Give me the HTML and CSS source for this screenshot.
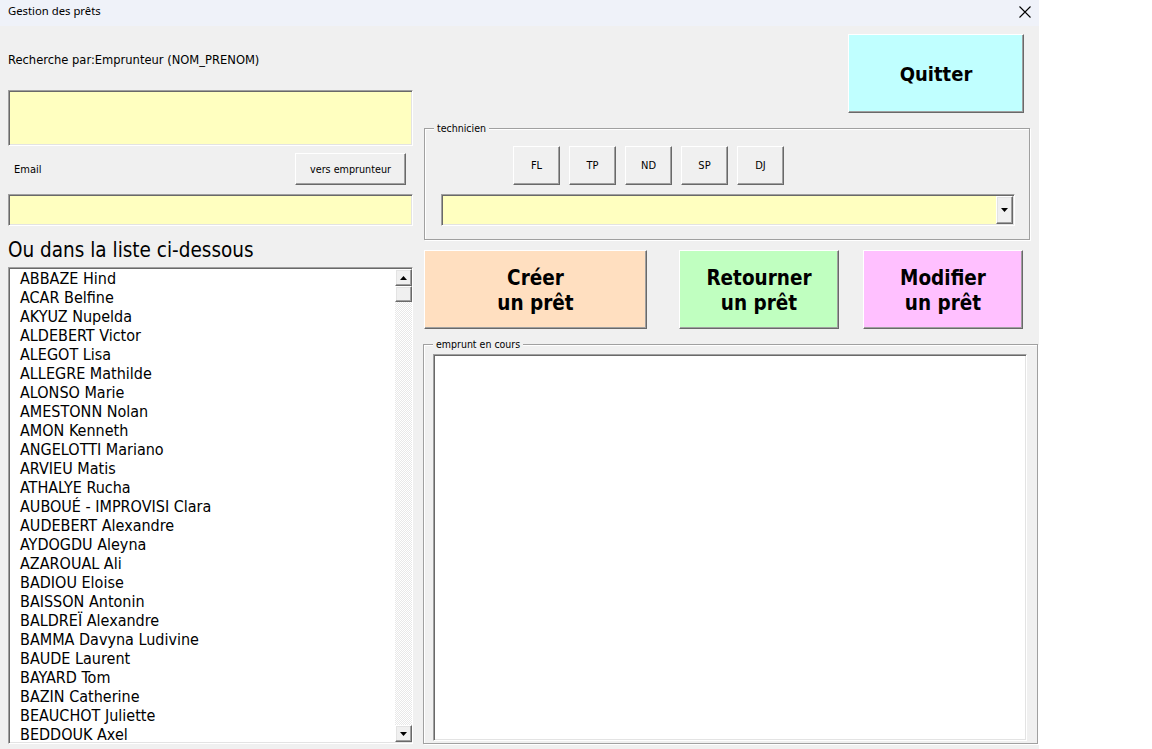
FILE: index.html
```html
<!DOCTYPE html>
<html lang="fr">
<head>
<meta charset="utf-8">
<title>Gestion des prêts</title>
<link rel="stylesheet" href="styles.css">
</head>
<body>
<div class="screen">
  <div class="form">
    <div class="titlebar">
      <span class="title">Gestion des prêts</span>
      <svg class="close" width="12" height="12" viewBox="0 0 12 12"><path d="M0.5 0.5 L11.5 11.5 M11.5 0.5 L0.5 11.5" stroke="#000" stroke-width="1.1" fill="none"/></svg>
    </div>
    <div class="body">
      <div class="left">
        <div class="lbl-search">Recherche par:Emprunteur (NOM_PRENOM)</div>
        <div class="textbox tb-big"></div>
        <div class="email-row">
          <span class="lbl-email">Email</span>
          <div class="btn btn-vers">vers emprunteur</div>
        </div>
        <div class="textbox tb-small"></div>
        <div class="heading">Ou dans la liste ci-dessous</div>
        <div class="listbox">
          <ul class="items">
            <li>ABBAZE Hind</li>
            <li>ACAR Belfine</li>
            <li>AKYUZ Nupelda</li>
            <li>ALDEBERT Victor</li>
            <li>ALEGOT Lisa</li>
            <li>ALLEGRE Mathilde</li>
            <li>ALONSO Marie</li>
            <li>AMESTONN Nolan</li>
            <li>AMON Kenneth</li>
            <li>ANGELOTTI Mariano</li>
            <li>ARVIEU Matis</li>
            <li>ATHALYE Rucha</li>
            <li>AUBOUÉ - IMPROVISI Clara</li>
            <li>AUDEBERT Alexandre</li>
            <li>AYDOGDU Aleyna</li>
            <li>AZAROUAL Ali</li>
            <li>BADIOU Eloise</li>
            <li>BAISSON Antonin</li>
            <li>BALDREÏ Alexandre</li>
            <li>BAMMA Davyna Ludivine</li>
            <li>BAUDE Laurent</li>
            <li>BAYARD Tom</li>
            <li>BAZIN Catherine</li>
            <li>BEAUCHOT Juliette</li>
            <li>BEDDOUK Axel</li>
          </ul>
          <div class="vscroll">
            <div class="sb-btn"><svg width="7" height="4" viewBox="0 0 7 4"><path d="M3.5 0 L7 4 L0 4 Z" fill="#000"/></svg></div>
            <div class="sb-thumb"></div>
            <div class="sb-track"></div>
            <div class="sb-btn"><svg width="7" height="4" viewBox="0 0 7 4"><path d="M0 0 L7 0 L3.5 4 Z" fill="#000"/></svg></div>
          </div>
        </div>
      </div>
      <div class="right">
        <div class="btn btn-quit">Quitter</div>
        <div class="frame frame-tech">
          <span class="frame-label">technicien</span>
          <div class="tech-buttons">
            <div class="btn btn-tech">FL</div>
            <div class="btn btn-tech">TP</div>
            <div class="btn btn-tech">ND</div>
            <div class="btn btn-tech">SP</div>
            <div class="btn btn-tech">DJ</div>
          </div>
          <div class="combo">
            <div class="combo-field"></div>
            <div class="combo-btn"><svg width="7" height="4" viewBox="0 0 7 4"><path d="M0 0 L7 0 L3.5 4 Z" fill="#000"/></svg></div>
          </div>
        </div>
        <div class="action-row">
          <div class="btn btn-big btn-create">Créer<br>un prêt</div>
          <div class="btn btn-big btn-return">Retourner<br>un prêt</div>
          <div class="btn btn-big btn-modify">Modifier<br>un prêt</div>
        </div>
        <div class="frame frame-loan">
          <span class="frame-label">emprunt en cours</span>
          <div class="loan-box"></div>
        </div>
      </div>
    </div>
  </div>
  <div class="outside"></div>
</div>
</body>
</html>
```

FILE: styles.css
```css
* { box-sizing: border-box; }
html, body { margin: 0; padding: 0; background: #fff; }
body {
  font-family: "DejaVu Sans Condensed", "DejaVu Sans", sans-serif;
  color: #000;
}
.screen { display: flex; width: 1152px; height: 749px; overflow: hidden; }
.form { width: 1039px; height: 749px; background: #f0f0f0; display: flex; flex-direction: column; }
.outside { flex: 1; background: #fff; }

.titlebar {
  height: 26px; background: #eff2f9;
  display: flex; align-items: center; justify-content: space-between;
  padding: 0 8px 5px 8px;
}
.title { font-family: "Noto Sans", "Open Sans", sans-serif; font-size: 11.3px; }
.close { margin-top: 3px; }

.body { display: flex; flex: 1; }
.left { width: 413px; padding-left: 8px; display: flex; flex-direction: column; }
.right { margin-left: 10px; width: 616px; display: flex; flex-direction: column; }

.lbl-search { margin-top: 26px; height: 13px; line-height: 15px; font-size: 12.8px; }

.textbox {
  background: #ffffc0;
  border-top: 1px solid #a0a0a0; border-left: 1px solid #a0a0a0;
  border-bottom: 1px solid #fff; border-right: 1px solid #fff;
  box-shadow: inset 1px 1px 0 #696969, inset -1px -1px 0 #e3e3e3;
}
.tb-big { margin-top: 25px; height: 56px; }
.email-row { margin-top: 7px; height: 32px; display: flex; align-items: center; justify-content: space-between; padding-right: 7px; }
.lbl-email { font-size: 11px; padding-left: 6px; }
.tb-small { margin-top: 9px; height: 32px; }

.btn {
  background: #f0f0f0;
  border-top: 1px solid #fff; border-left: 1px solid #fff;
  border-bottom: 1px solid #696969; border-right: 1px solid #696969;
  box-shadow: inset -1px -1px 0 #a0a0a0;
  display: flex; align-items: center; justify-content: center; text-align: center;
}
.btn-vers { width: 111px; height: 32px; font-size: 10.7px; }

.heading { height: 41px; padding-top: 9px; line-height: 30px; font-size: 20.5px; }

.listbox {
  height: 477px; background: #fff; display: flex;
  border-top: 1px solid #a0a0a0; border-left: 1px solid #a0a0a0;
  border-bottom: 1px solid #fff; border-right: 1px solid #fff;
  box-shadow: inset 1px 1px 0 #696969, inset -1px -1px 0 #e3e3e3;
  padding: 0 0 1px 2px;
}
.items { list-style: none; margin: 0; padding: 1px 0 0 9px; flex: 1; overflow: hidden; }
.items li { height: 19px; line-height: 19px; font-size: 16px; white-space: nowrap; }
.vscroll { width: 17px; display: flex; flex-direction: column; padding-top: 1px; }
.sb-btn, .sb-thumb, .combo-btn {
  background: #f0f0f0;
  border-top: 1px solid #fff; border-left: 1px solid #fff;
  border-bottom: 1px solid #696969; border-right: 1px solid #696969;
  box-shadow: inset -1px -1px 0 #a0a0a0, inset 1px 1px 0 #e3e3e3;
  display: flex; align-items: center; justify-content: center;
}
.sb-btn { height: 17px; }
.sb-thumb { height: 16px; }
.sb-track {
  flex: 1;
  background-color: #f4f4f4;
  background-image: repeating-conic-gradient(#ffffff 0 25%, #e8e8e8 0 50%);
  background-size: 2px 2px;
}

.btn-quit {
  align-self: flex-end; margin-right: 15px; margin-top: 8px;
  width: 176px; height: 79px; background: #c0ffff;
  font-weight: bold; font-size: 20px;
}

.frame {
  position: relative;
  border: 1px solid #a0a0a0;
  box-shadow: inset 1px 1px 0 #fff, 1px 1px 0 #fff;
}
.frame-label {
  position: absolute; top: -7px; left: 9px;
  padding: 0 3px; background: #f0f0f0;
  font-size: 10.5px; line-height: 12px;
}
.frame-tech { margin-top: 15px; margin-left: 1px; width: 606px; height: 112px; padding: 17px 0 0 16px; }
.tech-buttons { display: flex; gap: 9px; padding-left: 72px; }
.btn-tech { width: 47px; height: 39px; font-size: 11px; }
.combo {
  margin-top: 9px; width: 574px; height: 32px; display: flex;
  background: #ffffc0;
  border-top: 1px solid #a0a0a0; border-left: 1px solid #a0a0a0;
  border-bottom: 1px solid #fff; border-right: 1px solid #fff;
  box-shadow: inset 1px 1px 0 #696969, inset -1px -1px 0 #e3e3e3;
  padding: 1px;
}
.combo-field { flex: 1; }
.combo-btn { width: 17px; }

.action-row { margin-top: 10px; display: flex; margin-left: 1px; }
.btn-big { height: 79px; font-weight: bold; font-size: 20.5px; line-height: 25px; padding-top: 2px; }
.btn-create { width: 223px; background: #ffdfc0; }
.btn-return { width: 160px; margin-left: 32px; background: #c0ffc0; }
.btn-modify { width: 160px; margin-left: 24px; background: #ffc0ff; }

.frame-loan { margin-top: 15px; width: 615px; height: 400px; padding: 9px 0 0 9px; }
.loan-box {
  width: 594px; height: 387px; background: #fff;
  border-top: 1px solid #a0a0a0; border-left: 1px solid #a0a0a0;
  border-bottom: 1px solid #fff; border-right: 1px solid #fff;
  box-shadow: inset 1px 1px 0 #696969, inset -1px -1px 0 #e3e3e3;
}
```
